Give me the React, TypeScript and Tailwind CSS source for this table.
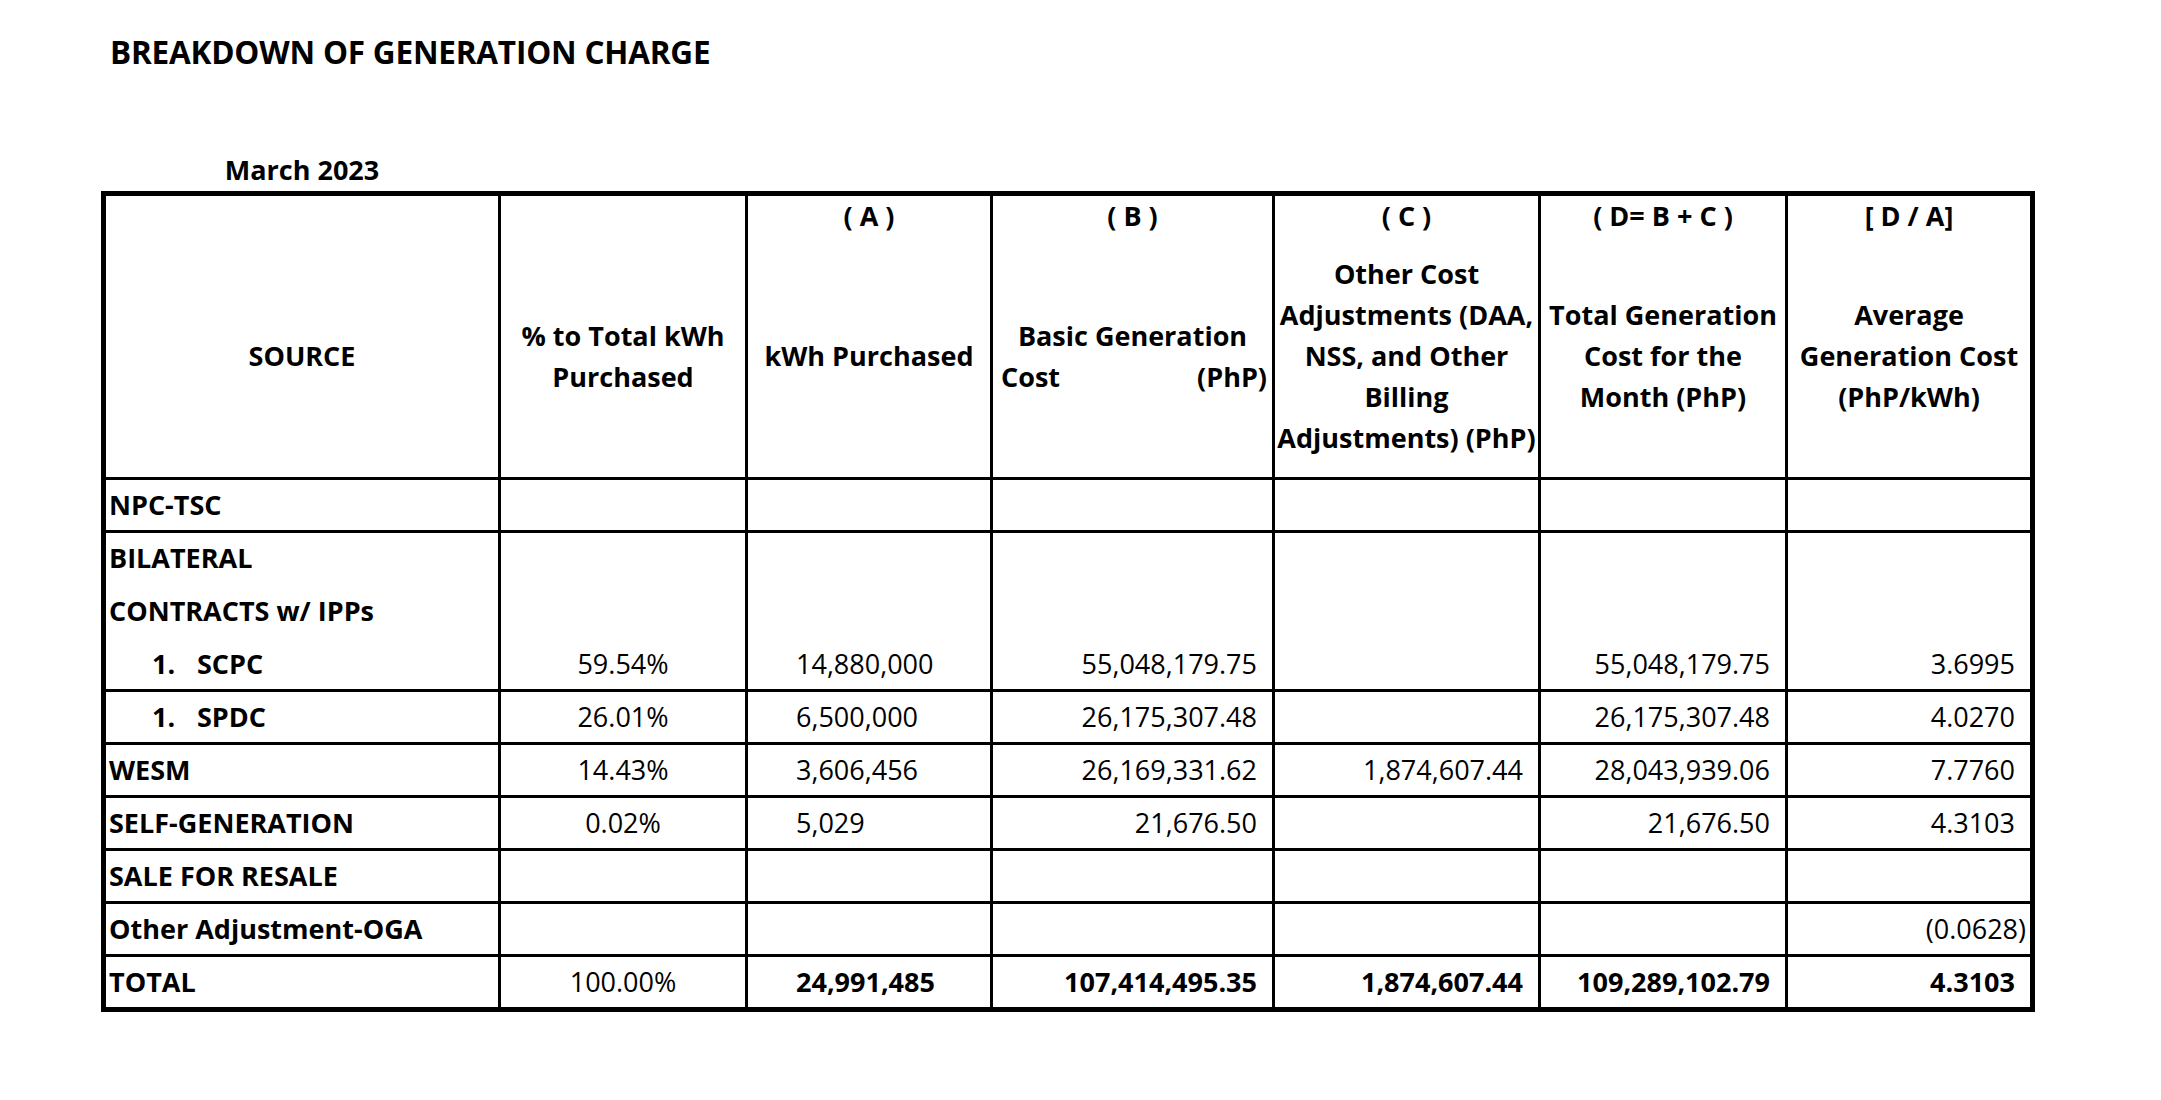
import React from 'react';

type Row = {
  label: string;
  indent?: boolean;
  noTop?: boolean;
  total?: boolean;
  cells: string[];
};

const gridCols = 'grid grid-cols-[392px_247px_245px_282px_266px_247px_245px]';

const rows: Row[] = [
  { label: 'NPC-TSC', cells: ['', '', '', '', '', ''] },
  { label: 'BILATERAL', cells: ['', '', '', '', '', ''] },
  { label: 'CONTRACTS w/ IPPs', noTop: true, cells: ['', '', '', '', '', ''] },
  {
    label: 'SCPC',
    indent: true,
    noTop: true,
    cells: ['59.54%', '14,880,000', '55,048,179.75', '', '55,048,179.75', '3.6995'],
  },
  {
    label: 'SPDC',
    indent: true,
    cells: ['26.01%', '6,500,000', '26,175,307.48', '', '26,175,307.48', '4.0270'],
  },
  {
    label: 'WESM',
    cells: ['14.43%', '3,606,456', '26,169,331.62', '1,874,607.44', '28,043,939.06', '7.7760'],
  },
  {
    label: 'SELF-GENERATION',
    cells: ['0.02%', '5,029', '21,676.50', '', '21,676.50', '4.3103'],
  },
  { label: 'SALE FOR RESALE', cells: ['', '', '', '', '', ''] },
  { label: 'Other Adjustment-OGA', cells: ['', '', '', '', '', '(0.0628)'] },
  {
    label: 'TOTAL',
    total: true,
    cells: ['100.00%', '24,991,485', '107,414,495.35', '1,874,607.44', '109,289,102.79', '4.3103'],
  },
];

const HeaderCell: React.FC<{ tag?: string; first?: boolean; children: React.ReactNode }> = ({
  tag,
  first,
  children,
}) => (
  <div className={`flex flex-col h-full ${first ? '' : 'border-l-[3px] border-black'}`}>
    <div className="h-[40px] flex items-center justify-center whitespace-nowrap">{tag}</div>
    <div className="flex-1 flex flex-col items-center justify-center text-center leading-[41px] pb-[2px]">
      {children}
    </div>
  </div>
);

export default function App() {
  return (
    <div className="min-h-screen bg-white text-black font-['Open_Sans',sans-serif]">
      <div className="pt-[32px] pl-[110px]">
        <h1 className="text-[31.5px] font-bold leading-[40px] tracking-[-0.2px]">BREAKDOWN OF GENERATION CHARGE</h1>
      </div>

      <div className="ml-[101px] mt-[80px] w-[1934px]">
        <div className="w-[397px] text-center text-[27px] font-bold leading-[36px] pl-[5px]">March 2023</div>

        <div className="mt-[3px] border-[5px] border-black text-[27px]">
          {/* Header */}
          <div className={`${gridCols} h-[281px] font-bold`}>
            <HeaderCell first>
              <span>SOURCE</span>
            </HeaderCell>
            <HeaderCell>
              <span>% to Total kWh</span>
              <span>Purchased</span>
            </HeaderCell>
            <HeaderCell tag="( A )">
              <span>kWh Purchased</span>
            </HeaderCell>
            <HeaderCell tag="( B )">
              <span>Basic Generation</span>
              <span className="flex w-full justify-between pl-[8px] pr-[5px]">
                <span>Cost</span>
                <span>(PhP)</span>
              </span>
            </HeaderCell>
            <HeaderCell tag="( C )">
              <span className="whitespace-nowrap">Other Cost</span>
              <span className="whitespace-nowrap">Adjustments (DAA,</span>
              <span className="whitespace-nowrap">NSS, and Other</span>
              <span className="whitespace-nowrap">Billing</span>
              <span className="whitespace-nowrap">Adjustments) (PhP)</span>
            </HeaderCell>
            <HeaderCell tag="( D= B + C )">
              <span className="whitespace-nowrap">Total Generation</span>
              <span>Cost for the</span>
              <span>Month (PhP)</span>
            </HeaderCell>
            <HeaderCell tag="[ D / A]">
              <span>Average</span>
              <span className="whitespace-nowrap">Generation Cost</span>
              <span>(PhP/kWh)</span>
            </HeaderCell>
          </div>

          {/* Body rows */}
          {rows.map((row, i) => {
            const pad = row.noTop ? 'pt-[3px]' : '';
            return (
              <div
                key={i}
                className={`${gridCols} h-[53px] ${row.noTop ? '' : 'border-t-[3px] border-black'}`}
              >
                <div className={`flex items-center pl-[3px] font-bold whitespace-nowrap ${pad}`}>
                  {row.indent ? (
                    <>
                      <span className="ml-[43px] w-[45px]">1.</span>
                      <span>{row.label}</span>
                    </>
                  ) : (
                    row.label
                  )}
                </div>
                {row.cells.map((value, j) => {
                  const bold = row.total && j > 0;
                  let align = 'justify-end pr-[15px]';
                  if (j === 0) align = 'justify-center';
                  if (j === 1) align = 'justify-start pl-[48px]';
                  if (value.startsWith('(')) align = 'justify-end pr-[4px]';
                  return (
                    <div
                      key={j}
                      className={`flex items-center border-l-[3px] border-black whitespace-nowrap ${pad} ${align} ${
                        bold ? 'font-bold' : ''
                      }`}
                    >
                      {value}
                    </div>
                  );
                })}
              </div>
            );
          })}
        </div>
      </div>
    </div>
  );
}
